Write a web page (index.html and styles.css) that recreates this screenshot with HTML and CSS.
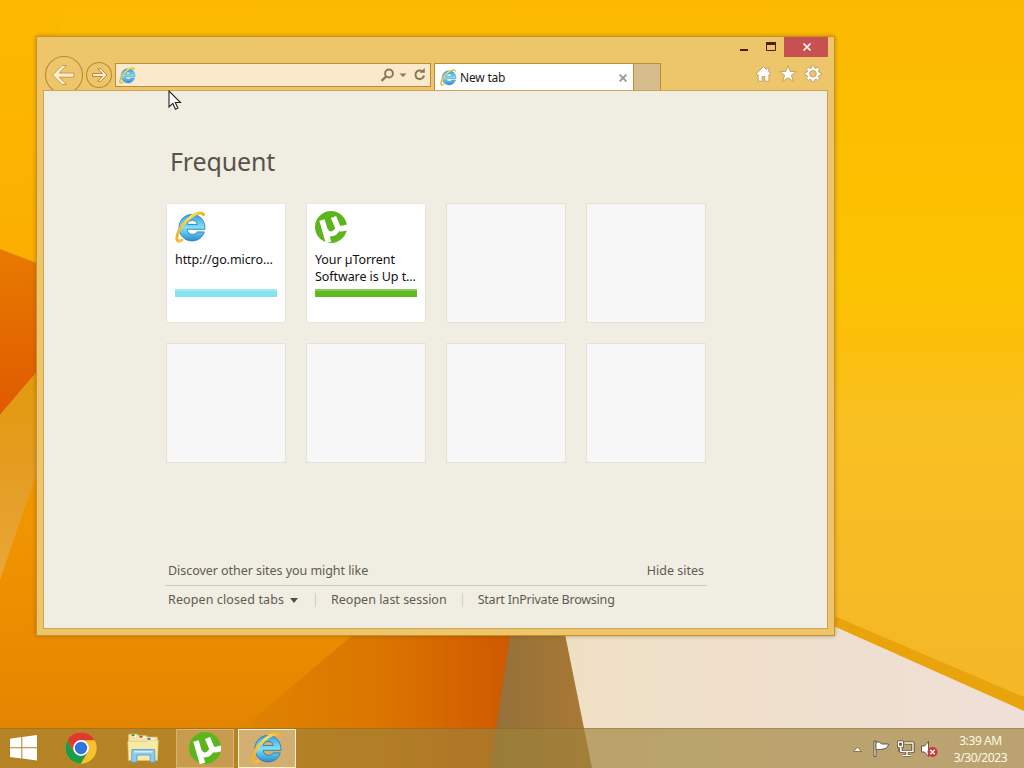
FILE: index.html
```html
<!DOCTYPE html>
<html lang="en">

<head>
    <meta charset="UTF-8">
    <meta name="viewport" content="width=device-width, initial-scale=1.0">
    <title>New tab</title>
    <link rel="stylesheet" href="styles.css">
</head>

<body>
    <svg class="symbols" width="0" height="0">
        <defs>
            <linearGradient id="ie-blue" x1="0" y1="0" x2="0" y2="1">
                <stop offset="0" stop-color="#3a9edb" />
                <stop offset="0.5" stop-color="#7fe0fb" />
                <stop offset="1" stop-color="#2b8ccf" />
            </linearGradient>
            <linearGradient id="ie-gold" x1="0" y1="0" x2="1" y2="0">
                <stop offset="0" stop-color="#f0b32b" />
                <stop offset="0.5" stop-color="#ffe05a" />
                <stop offset="1" stop-color="#edb427" />
            </linearGradient>
        </defs>
        <symbol id="ie" viewBox="0 0 32 32">
            <path fill="url(#ie-blue)" stroke="#2078b5" stroke-width=".8" fill-rule="evenodd" d="M30 18.3H12.2c.3 3.3 2.5 5 5.2 5 2.200 0 3.800-.9 4.700-2.400h7.200c-1.800 5.500-6.200 9-12.200 9C9.600 29.900 4 24.200 4 16.700S9.600 3.400 17.100 3.400 30.200 9 30 18.300zM12.300 13.500h9.900c-.4-2.700-2.300-4.200-4.900-4.200s-4.500 1.500-5 4.200z" />
            <path fill="none" stroke="url(#ie-gold)" stroke-width="3" stroke-linecap="round" d="M28.500 3.500C26 .2 19 2.500 12.500 8.500 5.500 15 .8 24.500 2 28.500 2.700 30.800 4.800 30.300 7 29" />
        </symbol>
        <symbol id="utorrent" viewBox="0 0 32 32">
            <circle class="ut-disc" cx="16" cy="16" r="16" />
            <g fill="none" stroke="#fff">
                <path stroke-width="5.600" d="M7 9l6.500 22.500" />
                <path stroke-width="5" d="M10.500 18.500c1.500 6.500 10 5.500 12-1" />
                <path stroke-width="5.600" d="M18.500 6l4 9.500c1.300 3 4 2.800 10 .6" />
            </g>
        </symbol>
    </svg>

    <div class="desktop">
        <svg class="wallpaper" viewBox="0 0 1024 768" preserveAspectRatio="none">
            <defs>
                <linearGradient id="sky" x1="0" y1="0" x2="0" y2="768" gradientUnits="userSpaceOnUse">
                    <stop offset="0" stop-color="#fcb900" />
                    <stop offset="0.36" stop-color="#fcc301" />
                    <stop offset="0.44" stop-color="#fbbf0a" />
                    <stop offset="0.55" stop-color="#f9c022" />
                    <stop offset="0.9" stop-color="#f4b727" />
                </linearGradient>
                <linearGradient id="left-sky" x1="0" y1="0" x2="0" y2="1">
                    <stop offset="0" stop-color="#fdb900" />
                    <stop offset="1" stop-color="#faad00" />
                </linearGradient>
                <linearGradient id="red" x1="0" y1="0" x2="0" y2="1">
                    <stop offset="0" stop-color="#e87a00" />
                    <stop offset="1" stop-color="#df5a00" />
                </linearGradient>
                <linearGradient id="floor" x1="0" y1="0" x2="0" y2="1">
                    <stop offset="0" stop-color="#efa000" />
                    <stop offset="0.5" stop-color="#f09400" />
                    <stop offset="1" stop-color="#e28200" />
                </linearGradient>
                <linearGradient id="haze" x1="0" y1="0" x2="0" y2="1">
                    <stop offset="0" stop-color="#e29a05" />
                    <stop offset="0.5" stop-color="#e49c20" />
                    <stop offset="1" stop-color="#eaa63a" />
                </linearGradient>
                <linearGradient id="fold" x1="240" y1="0" x2="510" y2="0" gradientUnits="userSpaceOnUse">
                    <stop offset="0" stop-color="#e08400" />
                    <stop offset="0.5" stop-color="#db7600" />
                    <stop offset="1" stop-color="#cf5900" />
                </linearGradient>
                <linearGradient id="shade" x1="490" y1="0" x2="585" y2="0" gradientUnits="userSpaceOnUse">
                    <stop offset="0" stop-color="#93703a" />
                    <stop offset="1" stop-color="#a97935" />
                </linearGradient>
                <linearGradient id="sand" x1="560" y1="0" x2="1024" y2="0" gradientUnits="userSpaceOnUse">
                    <stop offset="0" stop-color="#eedfc4" />
                    <stop offset="1" stop-color="#f0dfd6" />
                </linearGradient>
            </defs>
            <rect width="1024" height="768" fill="url(#sky)" />
            <rect width="60" height="300" fill="url(#left-sky)" />
            <path fill="url(#floor)" d="M0 415L300 300H560V768H0z" />
            <path fill="url(#red)" d="M0 249L60 272V345L0 415z" />
            <path fill="url(#haze)" d="M0 415L60 345V405L0 580z" />
            <path fill="url(#fold)" d="M360 629L195 768H500L515 629z" />
            <path fill="url(#shade)" d="M511 629L490 768H596L564 629z" />
            <path fill="url(#sand)" d="M564 629L834 620L1024 710V768H592z" />
            <path fill="#eaa40b" d="M820 610L1024 697V711L820 620z" />
        </svg>

        <main class="window">
            <header class="chrome">
                <div class="titlebar">
                    <button class="caption" aria-label="Minimize"><svg width="10" height="10"><path d="M1 8h8" stroke="#47230b" stroke-width="2" /></svg></button>
                    <button class="caption" aria-label="Maximize"><svg width="12" height="10"><path d="M1.500 1v7.500h9V1" fill="none" stroke="#47230b" /><path d="M1 1.500h10" stroke="#47230b" stroke-width="3" /></svg></button>
                    <button class="caption caption-close" aria-label="Close"><svg width="10" height="10" viewBox="0 0 10 10"><path d="M1.500 1.500l7 7m0-7l-7 7" stroke="#fff" stroke-width="1.600" /></svg></button>
                </div>
                <nav class="toolbar">
                    <svg class="back" width="40" height="40" viewBox="0 0 40 40">
                        <circle cx="20" cy="20" r="18.500" fill="none" stroke="#b98b2e" stroke-width="1.100" />
                        <path d="M8.500 20L18 10.500h4.600L15.300 18H30v4.200H15.300l7.300 7.300H18z" fill="#fdeccb" stroke="#c59a50" stroke-width="1" />
                    </svg>
                    <svg class="forward" width="28" height="28" viewBox="0 0 28 28">
                        <circle cx="14" cy="14" r="12.500" fill="none" stroke="#b98b2e" stroke-width="1.100" />
                        <path d="M22 14l-6.200-6.300h-3.100L17.300 12.500H7.500v3h9.800l-4.600 4.800h3.100z" fill="#fdeccb" stroke="#b98b3c" stroke-width="1" />
                    </svg>
                    <div class="address">
                        <svg width="17" height="17"><use href="#ie" /></svg>
                        <svg class="address-tools" width="48" height="16" viewBox="0 0 48 16">
                            <g fill="none" stroke="#8e7754" stroke-width="2">
                                <circle cx="9" cy="6.500" r="3.900" />
                                <path d="M6.200 9.400L1.500 13.800" stroke-width="2.300" />
                                <path d="M42.500 4.500A4.300 4.300 0 1 0 44 8.500" />
                            </g>
                            <path d="M19.500 6.500h7L23 10z M39.800 5.800h5V1z" fill="#8e7754" />
                        </svg>
                    </div>
                    <div class="tab">
                        <svg width="17" height="17"><use href="#ie" /></svg>
                        <span>New tab</span>
                        <svg class="tab-close" width="8" height="8" viewBox="0 0 8 8"><path d="M.6.600l6.800 6.800m0-6.800L.6 7.400" stroke="#9299a1" stroke-width="1.900" /></svg>
                    </div>
                    <div class="new-tab"></div>
                    <div class="tools">
                        <svg width="17" height="18" viewBox="0 0 17 18"><path d="M8.500 1.500L1 9l1.300 1.200.9-.8v6.800h4v-4.700h2.700v4.700h4V9.400l.8.800L16 9l-2.200-2.200V3h-2.200v1.600z" /></svg>
                        <svg width="18" height="18" viewBox="0 0 18 18"><path d="M9 .8l2.200 5.700h6l-4.800 3.700 1.900 6.200L9 12.700l-5.300 3.700 1.900-6.200L.8 6.500h6z" /></svg>
                        <svg width="18" height="18" viewBox="0 0 18 18">
                            <path fill-rule="evenodd" d="M7.600 1h2.800l.3 2 1.200.5 1.700-1.300 2 2-1.200 1.700.5 1.200 2.100.3v2.800l-2.100.3-.5 1.200 1.200 1.700-2 2-1.700-1.200-1.200.5-.3 2.100H7.600l-.3-2.100-1.200-.5-1.700 1.200-2-2 1.200-1.700-.5-1.200-2.100-.3V7.400l2.100-.3.5-1.200-1.200-1.700 2-2 1.700 1.300L7.300 3zM9 5.500a3.300 3.300 0 1 0 0 6.600 3.300 3.300 0 0 0 0-6.600z" />
                        </svg>
                    </div>
                </nav>
            </header>

            <section class="page">
                <h1>Frequent</h1>
                <div class="tiles">
                    <a class="tile site">
                        <svg width="32" height="32"><use href="#ie" /></svg>
                        <span class="tile-name">http://go.micro...</span>
                        <span class="tile-bar bar-blue"></span>
                    </a>
                    <a class="tile site">
                        <svg width="32" height="32"><use href="#utorrent" /></svg>
                        <span class="tile-name">Your µTorrent<br>Software is Up t...</span>
                        <span class="tile-bar bar-green"></span>
                    </a>
                    <div class="tile"></div>
                    <div class="tile"></div>
                    <div class="tile"></div>
                    <div class="tile"></div>
                    <div class="tile"></div>
                    <div class="tile"></div>
                </div>
                <footer class="links">
                    <div class="links-top">
                        <a class="discover">Discover other sites you might like</a>
                        <a class="hide">Hide sites</a>
                    </div>
                    <div class="links-bottom">
                        <a class="closed">Reopen closed tabs</a>
                        <i class="arrow"></i>
                        <i class="divider"></i>
                        <a class="last">Reopen last session</a>
                        <i class="divider"></i>
                        <a class="private">Start InPrivate Browsing</a>
                    </div>
                </footer>
            </section>
        </main>

        <svg class="cursor" width="14" height="21" viewBox="0 0 14 21">
            <path d="M1 1v16l3.800-3.600 2.700 5.800 2.400-1.100-2.600-5.600h5.200z" fill="#fff" stroke="#222" stroke-width="1.100" />
        </svg>

        <div class="taskbar">
            <div class="task start">
                <svg width="28" height="26" viewBox="0 0 28 26"><path fill="#fff" d="M0 3.700L11.300 2v10.300H0zM12.300 1.900L27 0v12.300H12.300zM0 13.300h11.300v10.200L0 21.900zM12.300 13.300H27V25.500l-14.700-1.900z" /></svg>
            </div>
            <div class="task chrome-app">
                <svg width="32" height="32" viewBox="0 0 32 32">
                    <circle cx="16" cy="16" r="15.700" fill="#f9c22d" />
                    <path fill="#1f9a49" d="M2.400 8.200A15.700 15.700 0 0 0 15.700 31.700L22.800 20 16 16 9.200 19.900z" />
                    <path fill="#df3a2e" d="M2.400 8.200A15.700 15.700 0 0 1 29.600 8.200H16L9.200 19.900z" />
                    <circle cx="16" cy="16" r="7.900" fill="#fff" />
                    <circle cx="16" cy="16" r="6.200" fill="#2f74df" />
                </svg>
            </div>
            <div class="task">
                <svg width="32" height="30" viewBox="0 0 32 30">
                    <path fill="#f2e3a0" stroke="#d8bf69" stroke-width=".6" d="M1.500 2.500q0-1.500 1.500-1.500h7l1.500 1.500H19l1.500 1.500h10v6.500H1.500z" />
                    <path fill="#fff" d="M4 2h5v2H4zM12 3.500h6v2h-6zM20.500 5.500h8v2h-8z" />
                    <path fill="#23a142" d="M4.500 1.300h3v2h-3z" />
                    <path fill="#d6432d" d="M12.500 2.800h3v2h-3z" />
                    <path fill="#3283cf" d="M20.500 5h3v2h-3z" />
                    <path fill="#f7e9a6" stroke="#dcc574" stroke-width=".6" d="M.8 8.500h19l2-1.500h9.500L30.500 27.500h-29z" />
                    <path fill="#8fcbee" stroke="#4e9bd0" stroke-width=".8" d="M5 16.500h22.500l.7 12.800h-5V22H10v7.300H4.500z" />
                    <path fill="#d2effc" d="M7 18h18.500v1.500H7z" />
                </svg>
            </div>
            <div class="task open"><svg width="32" height="32"><use href="#utorrent" /></svg></div>
            <div class="task open active"><svg width="32" height="32"><use href="#ie" /></svg></div>

            <div class="tray">
                <svg class="tray-icons" width="88" height="18" viewBox="0 0 88 18" stroke-linejoin="round">
                    <path d="M1.500 11.500h8l-4-4.500z" fill="#fff" stroke="#76603c" stroke-width=".8" />
                    <g fill="#fff" stroke="#5d4830" stroke-width=".9">
                        <path d="M22 1h2v15.500h-2z" />
                        <path d="M24 2.500c3-1.500 4 .5 6 1.500h6.500c-.5 3-2 4.700-4.500 4.700-2.500 1.500-5 0-8 1.300z" />
                    </g>
                    <g fill="none">
                        <path d="M52.500 3h8.500v8.500h-12V8M55 12v3m-4 .5h8M48 6v5.500" stroke="#5d4830" stroke-width="3.200" />
                        <path d="M46.500 2h4v4.500h-4z" fill="#76603c" stroke="#5d4830" stroke-width="3" />
                        <path d="M52.500 3h8.500v8.500h-12V8M55 12v3m-4 .5h8M48.500 6v5.500M46.500 2h4v4.500h-4z" stroke="#fff" stroke-width="1.400" />
                    </g>
                    <path d="M69.500 6h3l4-4.500v15l-4-4.500h-3z" fill="#fff" stroke="#5d4830" stroke-width=".9" />
                    <circle cx="80.500" cy="12" r="5" fill="#d3343b" />
                    <path d="M78.300 9.800l4.400 4.400m0-4.400l-4.400 4.400" stroke="#fff" stroke-width="1.600" />
                </svg>
                <div class="clock">
                    <span class="time">3:39 AM</span>
                    <span class="date">3/30/2023</span>
                </div>
            </div>
        </div>
    </div>
</body>

</html>
```
FILE: styles.css
```css
* {
    box-sizing: border-box;
}

body {
    margin: 0;
    font-family: "Noto Sans", "Open Sans", sans-serif;
    font-size: 12.5px;
    color: #1b1b1b;
}

svg {
    display: block;
    flex: none;
}

.symbols {
    position: absolute;
}

.ut-disc {
    fill: #5cb51c;
}

.desktop {
    position: relative;
    display: flex;
    flex-direction: column;
    justify-content: space-between;
    width: 1024px;
    height: 768px;
    padding-top: 36px;
    overflow: hidden;
}

.wallpaper {
    position: absolute;
    top: 0;
    left: 0;
    width: 100%;
    height: 100%;
}

/* browser window */
.window {
    position: relative;
    display: flex;
    flex-direction: column;
    width: 799px;
    height: 600px;
    margin-left: 36px;
    padding: 0 6px 6px;
    background: #edc66c;
    border: 1px solid #c6912b;
    box-shadow: 0 0 4px rgba(110, 70, 0, 0.45);
}

.chrome {
    height: 53px;
    overflow: hidden;
}

.titlebar {
    display: flex;
    justify-content: flex-end;
    height: 20px;
    margin-right: -1px;
}

.caption {
    display: flex;
    align-items: center;
    justify-content: center;
    width: 27px;
    padding: 0;
    background: none;
    border: 0;
}

.caption-close {
    width: 45px;
    background: #c75050;
}

.toolbar {
    display: flex;
    align-items: flex-start;
    height: 33px;
    padding-left: 1px;
}

.back {
    margin-top: -2px;
}

.forward {
    margin: 4px 2px 0 1px;
}

.address,
.tab,
.new-tab {
    height: 24px;
    margin-top: 6px;
    border: 1px solid #bd8d36;
}

.address {
    display: flex;
    align-items: center;
    justify-content: space-between;
    width: 316px;
    padding: 0 3px;
    background: #fae9ca;
}

.address-tools {
    margin-right: -1px;
}

.tab {
    display: flex;
    align-items: center;
    width: 200px;
    height: 28px;
    margin-left: 3px;
    padding: 0 6px 0 5px;
    font-size: 12px;
    letter-spacing: -0.2px;
    background: #fff;
    border-bottom: 0;
}

.tab span {
    margin-left: 3px;
}

.tab-close {
    margin-left: auto;
}

.new-tab {
    width: 27px;
    height: 28px;
    background: #d5bd8c;
    border-left: 0;
}

.tools {
    display: flex;
    gap: 7px;
    margin: 8px 6px 0 auto;
}

.tools path {
    fill: #fff;
    stroke: #b99556;
    stroke-width: 0.8;
}

/* new tab page */
.page {
    flex: 1;
    padding: 52px 121px 0 122px;
    background: #f0ede2;
    border: 1px solid #cfa352;
}

h1 {
    height: 36px;
    margin: 0 0 24px 4px;
    font-size: 25px;
    font-weight: 400;
    line-height: 36px;
    letter-spacing: -0.15px;
    color: #57534a;
}

.tiles {
    display: grid;
    grid-template-columns: repeat(4, 120px);
    grid-auto-rows: 120px;
    gap: 20px;
}

.tile {
    background: #f7f7f7;
    border: 1px solid #e3e1d9;
}

.site {
    display: flex;
    flex-direction: column;
    padding: 7px 8px;
    color: #111;
    background: #fff;
    border-color: #e8e5dc;
}

.tile-name {
    height: 34px;
    margin-top: 8px;
    line-height: 17px;
    letter-spacing: -0.08px;
    white-space: nowrap;
}

.tile-bar {
    height: 8px;
    margin-top: 4px;
}

.bar-blue {
    background: #85e2f2;
    border-top: 2px solid #a5e6f1;
}

.bar-green {
    background: #5fb921;
    border-top: 2px solid #87c95c;
}

.links {
    width: 542px;
    margin: 98px 0 0 -1px;
    color: #5f5b51;
    line-height: 20px;
}

.links-top {
    display: flex;
    justify-content: space-between;
    height: 25px;
    padding: 0 3px;
    border-bottom: 1px solid #cdcabf;
}

.discover {
    letter-spacing: -0.05px;
}

.links-bottom {
    display: flex;
    align-items: center;
    height: 28px;
    padding-left: 3px;
}

.closed {
    letter-spacing: 0.11px;
}

.private {
    letter-spacing: -0.22px;
}

.arrow {
    margin-left: 6px;
    border: 4px solid transparent;
    border-top: 5px solid #514e46;
    border-bottom: 0;
}

.divider {
    width: 1px;
    height: 14px;
    margin: 0 15px 0 17px;
    background: #d3d0c5;
}

.last + .divider {
    margin-left: 15px;
}

.cursor {
    position: absolute;
    top: 90px;
    left: 168px;
}

/* taskbar */
.taskbar {
    position: relative;
    display: flex;
    height: 40px;
    background: rgba(157, 131, 58, 0.65);
    border-top: 1px solid rgba(120, 90, 30, 0.35);
}

.task {
    display: flex;
    align-items: center;
    justify-content: center;
    width: 58px;
    margin-right: 4px;
    padding-bottom: 1px;
}

.start {
    width: 48px;
    margin-right: 4px;
    padding-bottom: 2px;
}

.open {
    background: rgba(255, 230, 200, 0.25);
    border: 1px solid #ddb36d;
}

.open .ut-disc {
    fill: #66ad3d;
}

.active {
    background: rgba(255, 235, 220, 0.42);
    border: 1px solid #fff1cc;
}

.tray {
    display: flex;
    align-items: center;
    margin-left: auto;
}

.clock {
    width: 84px;
    padding: 0 3px 0 0;
    font-size: 12px;
    line-height: 17px;
    letter-spacing: -0.4px;
    text-align: center;
    color: #fff8e5;
}

.clock span {
    display: block;
}
```
